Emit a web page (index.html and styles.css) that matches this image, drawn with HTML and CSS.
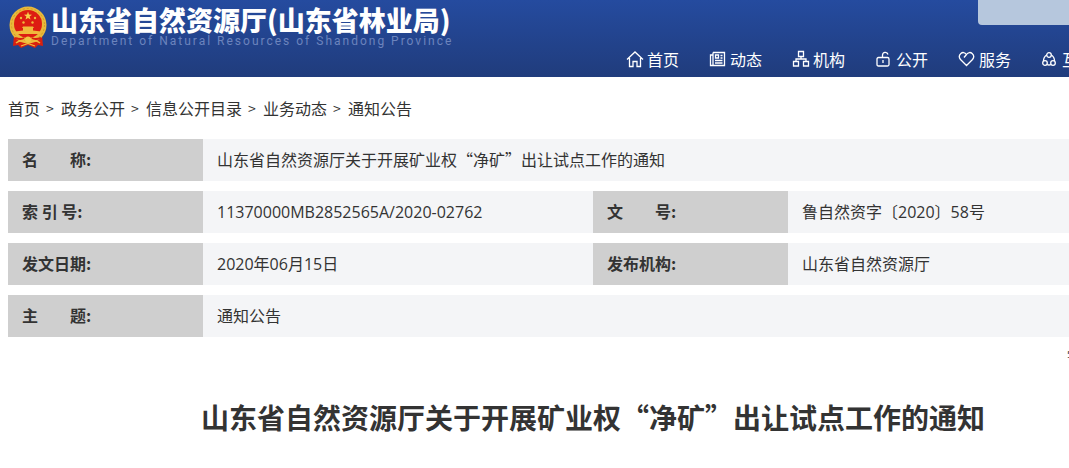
FILE: index.html
```html
<!DOCTYPE html>
<html lang="zh-CN">
<head>
  <meta charset="UTF-8" />
  <meta name="viewport" content="width=device-width, initial-scale=1" />
  <title>山东省自然资源厅关于开展矿业权“净矿”出让试点工作的通知</title>
  <link rel="stylesheet" href="styles.css">
</head>
<body>
  <header class="header">
    <div class="container header-inner">
      <a class="logo" href="#">
        <!-- 国徽 -->
        <svg class="emblem" viewBox="0 0 38 42" aria-hidden="true">
          <path d="M5 29 L4 40 L9 39 L12 42 L19 39 L26 42 L29 39 L34 40 L33 29 Z" fill="#d8200f" />
          <circle cx="19" cy="19" r="18.500" fill="#e9b93a" />
          <circle cx="19" cy="19" r="16.500" fill="none" stroke="#d39a28" stroke-width="1" stroke-dasharray="2 2" />
          <circle cx="19" cy="18" r="14" fill="#dd1c12" />
          <path d="M19 5.500 L20 8.500 L23 8.700 L20.600 10.600 L21.500 13.500 L19 12 L16.500 13.500 L17.400 10.600 L15 8.700 L18 8.500 Z" fill="#f7cf4c" />
          <g fill="#f0b93c">
            <circle cx="12" cy="12" r="1.200" />
            <circle cx="26" cy="12" r="1.200" />
            <circle cx="14.500" cy="16.500" r="1.200" />
            <circle cx="23.500" cy="16.500" r="1.200" />
            <path d="M14 20.500 L24 20.500 L25 22 L24 22 L24 24.500 L32 25.500 L31 28 L7 28 L6 25.500 L14 24.500 L14 22 L13 22 Z" />
          </g>
          <path d="M6 32 Q12 34 15 32 M23 32 Q26 34 32 32" fill="none" stroke="#d8200f" stroke-width="2" />
          <path d="M7 37 Q12 33 16 36 L22 36 Q26 33 31 37" fill="none" stroke="#f0b93c" stroke-width="1.500" />
          <circle cx="19" cy="33.500" r="3" fill="#f0c545" />
          <path d="M12 40 L19 37.500 L26 40" fill="none" stroke="#f0b93c" stroke-width="1.200" />
        </svg>
        <span class="logo-text">
          <strong>山东省自然资源厅(山东省林业局)</strong>
          <span class="logo-en">Department of Natural Resources of Shandong Province</span>
        </span>
      </a>
      <div class="header-right">
        <input class="search" type="text" aria-label="搜索" />
        <nav class="nav">
          <a href="#">
            <svg class="icon" viewBox="0 0 18 18"><path d="M1 9.500 L9 2 L17 9.500 M3.500 8 V16.500 H7 V11.500 H11 V16.500 H14.500 V8" /></svg>
            首页
          </a>
          <a href="#">
            <svg class="icon" viewBox="0 0 18 18"><path d="M4 2.500 H15.500 V15.500 H1.500 V5 H4" /><path d="M4 2.500 V15.500 M6.500 5 H9.500 V8 H6.500 Z M11.500 5.500 H13.500 M11.500 8 H13.500 M6 10.500 H13.500 M6 13 H13.500" /></svg>
            动态
          </a>
          <a href="#">
            <svg class="icon" viewBox="0 0 18 18"><path d="M6.500 1.500 H11.500 V6.500 H6.500 Z M9 6.500 V9 M4 11.500 V9 H14 V11.500 M1.500 11.500 H6.500 V16 H1.500 Z M11.500 11.500 H16.500 V16 H11.500 Z" /></svg>
            机构
          </a>
          <a href="#">
            <svg class="icon" viewBox="0 0 18 18"><path d="M3.500 7.500 H12.500 Q14 7.500 14 9 V14.500 Q14 16 12.500 16 H3.500 Q2 16 2 14.500 V9 Q2 7.500 3.500 7.500 Z M7.500 7.500 V5 A2.800 2.800 0 0 1 13 4.500 M8 10 V13" /></svg>
            公开
          </a>
          <a href="#">
            <svg class="icon" viewBox="0 0 18 18"><path d="M8.500 15.500 L2.500 9.500 C-1 5 5 -0.500 8.500 4.500 C12 -0.500 18 5 14.500 9.500 Z M8.500 4.500 L6 7.500" /></svg>
            服务
          </a>
          <a href="#">
            <svg class="icon" viewBox="0 0 18 18"><circle cx="8" cy="5" r="2.300" /><circle cx="4" cy="13" r="2.300" /><circle cx="12" cy="13" r="2.300" /><path d="M5.700 5 Q2.500 7 2.500 11 M10.300 5 Q13.500 7 13.500 11 M6 14.500 Q8 15.500 10 14.500" /></svg>
            互动
          </a>
        </nav>
      </div>
    </div>
  </header>

  <main class="container">
    <div class="breadcrumb">
      <a href="#">首页</a>
      <span>&gt;</span>
      <a href="#">政务公开</a>
      <span>&gt;</span>
      <a href="#">信息公开目录</a>
      <span>&gt;</span>
      <a href="#">业务动态</a>
      <span>&gt;</span>
      <a href="#">通知公告</a>
    </div>

    <table class="info">
      <colgroup>
        <col class="col-label" />
        <col />
        <col class="col-label" />
        <col />
      </colgroup>
      <tr>
        <th scope="row">名　　称:</th>
        <td colspan="3">山东省自然资源厅关于开展矿业权“净矿”出让试点工作的通知</td>
      </tr>
      <tr>
        <th scope="row">索 引 号:</th>
        <td class="num">11370000MB2852565A/2020-02762</td>
        <th scope="row">文　　号:</th>
        <td class="num">鲁自然资字〔2020〕58号</td>
      </tr>
      <tr>
        <th scope="row">发文日期:</th>
        <td class="num">2020年06月15日</td>
        <th scope="row">发布机构:</th>
        <td>山东省自然资源厅</td>
      </tr>
      <tr>
        <th scope="row">主　　题:</th>
        <td colspan="3">通知公告</td>
      </tr>
    </table>

    <div class="tools">
      <span>字体：</span>
      <a href="#">大</a>
      <a href="#">中</a>
      <a href="#">小</a>
    </div>

    <h1>山东省自然资源厅关于开展矿业权“净矿”出让试点工作的通知</h1>
  </main>
</body>
</html>
```

FILE: styles.css
```css
* {
  box-sizing: border-box;
}

body {
  margin: 0;
  font-family: "Noto Sans CJK SC", sans-serif;
  font-size: 16px;
  color: #333;
  background-color: #fff;
  overflow-x: hidden;
}

a {
  color: inherit;
  text-decoration: none;
}

.container {
  min-width: 1170px;
  margin: 0 8px;
}

/* Header */
.header {
  background: linear-gradient(#254b9f, #203c7c);
  color: #fff;
}

.header-inner {
  display: flex;
  justify-content: space-between;
}

.logo {
  display: flex;
  gap: 3px;
  padding-top: 6px;
}

.emblem {
  width: 40px;
  height: 42px;
}

.logo-text {
  display: flex;
  flex-direction: column;
  white-space: nowrap;
}

.logo-text strong {
  font-size: 27px;
  font-weight: 900;
  line-height: 27px;
}

.logo-en {
  font-family: Roboto, sans-serif;
  font-size: 12px;
  line-height: 17px;
  letter-spacing: 2px;
  color: #6c84bd;
}

.header-right {
  display: flex;
  flex-direction: column;
}

.search {
  align-self: flex-end;
  width: 200px;
  height: 25px;
  padding: 0 10px;
  border: none;
  border-radius: 0 0 4px 4px;
  background-color: #b6c7dd;
  outline: none;
}

.nav {
  display: flex;
  gap: 30px;
  padding: 17px 84px 1px 0;
  line-height: 34px;
}

.nav a {
  display: flex;
  align-items: center;
  gap: 3px;
}

.icon {
  width: 18px;
  height: 18px;
  fill: none;
  stroke: #fff;
  stroke-width: 1.3;
}

/* Breadcrumb */
.breadcrumb {
  display: flex;
  gap: 6px;
  padding: 20px 0 10px;
  line-height: 22px;
}

.breadcrumb span {
  width: 9px;
  font-size: 14px;
}

/* Info table */
.info {
  width: 100%;
  table-layout: fixed;
  border-collapse: separate;
  border-spacing: 0 10px;
}

.info .col-label {
  width: 195px;
}

.info th,
.info td {
  height: 42px;
  padding: 0 14px 2px;
  line-height: 24px;
  text-align: left;
}

.info th {
  background-color: #cfcfcf;
}

.info td {
  background-color: #f4f5f7;
}

.info .num {
  padding-bottom: 0;
  font-family: "Open Sans", "Noto Sans CJK SC", sans-serif;
}

.tools {
  display: flex;
  justify-content: flex-end;
  gap: 13px;
  font-size: 12px;
  line-height: 18px;
}

h1 {
  margin: 31px 0;
  font-size: 28px;
  line-height: 42px;
  text-align: center;
}
```
